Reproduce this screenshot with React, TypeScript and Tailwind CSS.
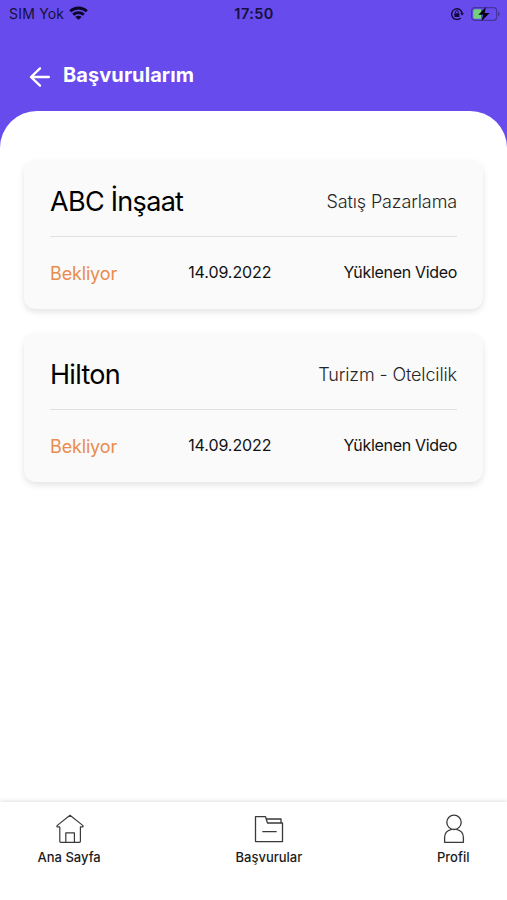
type Application = {
  company: string;
  field: string;
  status: string;
  date: string;
  attachment: string;
};

const applications: Application[] = [
  { company: "ABC İnşaat", field: "Satış Pazarlama", status: "Bekliyor", date: "14.09.2022", attachment: "Yüklenen Video" },
  { company: "Hilton", field: "Turizm - Otelcilik", status: "Bekliyor", date: "14.09.2022", attachment: "Yüklenen Video" },
];

export default function App() {
  return (
    <div className="flex h-[900px] w-[507px] flex-col overflow-hidden bg-[#674bec] font-['Inter',sans-serif]">
      <StatusBar />
      <header className="flex h-[84px] items-center gap-3 pt-[15px] pl-[28px] text-white">
        <BackIcon />
        <h1 className="pb-[3px] text-[20px] leading-6 font-bold tracking-[0.08px]">Başvurularım</h1>
      </header>
      <main className="flex flex-1 flex-col gap-6 rounded-t-[37px] bg-white px-6 pt-[49px]">
        {applications.map((item) => (
          <ApplicationCard key={item.company} item={item} />
        ))}
      </main>
      <TabBar />
    </div>
  );
}

function StatusBar() {
  return (
    <div className="grid h-[27px] shrink-0 grid-cols-3 items-center pr-[6px] pl-[9px] text-[14px] leading-none text-[#15103a]">
      <div className="flex items-center gap-[5px]">
        <span className="tracking-[0.2px]">SIM Yok</span>
        <WifiIcon />
      </div>
      <span className="pt-px pr-[2px] text-center text-[14.5px] font-semibold tracking-[0.4px]">17:50</span>
      <div className="flex items-center justify-end gap-[6px]">
        <RotationLockIcon />
        <BatteryIcon />
      </div>
    </div>
  );
}

function ApplicationCard({ item }: { item: Application }) {
  return (
    <article className="flex h-[149px] flex-col rounded-xl bg-[#fafafa] px-[26px] shadow-[0_3px_6px_rgba(0,0,0,0.11)]">
      <div className="flex h-[77px] items-center justify-between border-b border-[#e0e0e0] pt-[8px]">
        <h2 className="text-[27px] leading-8 tracking-[-0.7px] text-black">{item.company}</h2>
        <p className="text-[18px] leading-6 font-light tracking-[-0.12px] text-[#262626]">{item.field}</p>
      </div>
      <div className="grid grid-cols-3 items-start pt-[23px] text-[16px] leading-6 text-[#111]">
        <span className="pt-[2px] text-[18px] tracking-[-0.15px] text-[#e98c4d]">{item.status}</span>
        <span className="pl-[2.5px] tracking-[-0.08px]">{item.date}</span>
        <span className="text-right tracking-[-0.32px] whitespace-nowrap">{item.attachment}</span>
      </div>
    </article>
  );
}

function TabBar() {
  return (
    <nav className="flex h-[98px] shrink-0 items-start justify-between bg-white px-[37.5px] pt-[11px] text-[13px] leading-4 text-[#1c1c1c] shadow-[0_-1px_4px_rgba(0,0,0,0.13)]">
      <Tab label="Ana Sayfa" icon={<HomeIcon />} />
      <Tab label="Başvurular" icon={<FolderIcon />} />
      <Tab label="Profil" icon={<ProfileIcon />} />
    </nav>
  );
}

function Tab({ label, icon }: { label: string; icon: React.ReactNode }) {
  return (
    <button className="flex flex-col items-center gap-[5px] font-medium">
      {icon}
      <span>{label}</span>
    </button>
  );
}

function BackIcon() {
  return (
    <svg className="h-[22px] w-[23px]" viewBox="0 0 23 22" fill="none" stroke="currentColor" strokeWidth="2.400" strokeLinecap="round" strokeLinejoin="round">
      <path d="M20.800 11H3.500M12 2.400 3 11l9 8.600" />
    </svg>
  );
}

function WifiIcon() {
  return (
    <svg className="mb-[2px] h-[14px] w-[19px]" viewBox="0 0 19 14" fill="none" stroke="#0b0726" strokeWidth="2.900">
      <path d="M1.200 5.300C6 .9 13 .9 17.800 5.300" />
      <path d="M4.200 8.700c3.100-2.700 7.500-2.700 10.600 0" />
      <path d="M9.500 13.800 6.300 10.900c1.800-1.500 4.600-1.500 6.400 0Z" fill="#0b0726" stroke="none" />
    </svg>
  );
}

function RotationLockIcon() {
  return (
    <svg className="h-[14px] w-[14px]" viewBox="0 0 14 14" fill="none" stroke="#120a3c" strokeWidth="1.400">
      <path d="M10.700 10.900A5.300 5.300 0 1 1 12.200 6.400" />
      <path d="M10.300 6h3.600l-1.800 2.800Z" fill="#120a3c" stroke="none" />
      <rect x="4.400" y="6.300" width="5" height="3.600" rx="0.500" fill="#120a3c" stroke="none" />
      <path d="M5.400 6.500V5.300a1.500 1.500 0 0 1 3 0v1.200" strokeWidth="1" />
    </svg>
  );
}

function BatteryIcon() {
  return (
    <svg className="h-[16px] w-[31px]" viewBox="0 0 31 16">
      <rect x="1.600" y="1.700" width="25" height="12.600" rx="3" fill="none" stroke="#45359f" strokeWidth="1.200" />
      <path d="M28 5.800v4.400c1-.4 1.700-1.200 1.700-2.200S29 6.200 28 5.800Z" fill="#45359f" />
      <path d="M4.800 3.300H11V12.700H4.800a1.500 1.500 0 0 1-1.500-1.500V4.800a1.500 1.500 0 0 1 1.500-1.500Z" fill="#73cf7c" />
      <path d="M16 1 8.300 8.800h4.900L11.600 15l8-7.900h-5Z" fill="#05030f" />
    </svg>
  );
}

function HomeIcon() {
  return (
    <svg className="ml-px h-[31px] w-[28px]" viewBox="0 0 28 31" fill="none" stroke="#3a3a3a" strokeWidth="1.200" strokeLinejoin="round">
      <path d="M3.800 13.800v14.500q0 1 1 1h18.600q1 0 1-1V13.800" />
      <path d="M3.800 13.800H1v-1.200L14 2.300l13 10.300v1.200h-2.800" />
      <path d="M9.800 29.300v-9.500h8.600v9.500" />
    </svg>
  );
}

function FolderIcon() {
  return (
    <svg className="h-[31px] w-[30px]" viewBox="0 0 30 31" fill="none" stroke="#3a3a3a" strokeWidth="1.300" strokeLinejoin="round">
      <path d="M1.500 3.700h10l2 6.300h15v18.600h-27Z" />
      <path d="M12.300 6H27v4M8.300 18.600h14.400" />
    </svg>
  );
}

function ProfileIcon() {
  return (
    <svg className="ml-px h-[31px] w-[22px]" viewBox="0 0 22 31" fill="none" stroke="#3a3a3a" strokeWidth="1.300" strokeLinejoin="round">
      <circle cx="11" cy="9.300" r="7.200" />
      <path d="M8.700 16.300C4.500 17.200 1.600 20.300 1.600 24.500v4.800h18.800v-4.800c0-4.200-2.900-7.300-7.100-8.200" />
    </svg>
  );
}
